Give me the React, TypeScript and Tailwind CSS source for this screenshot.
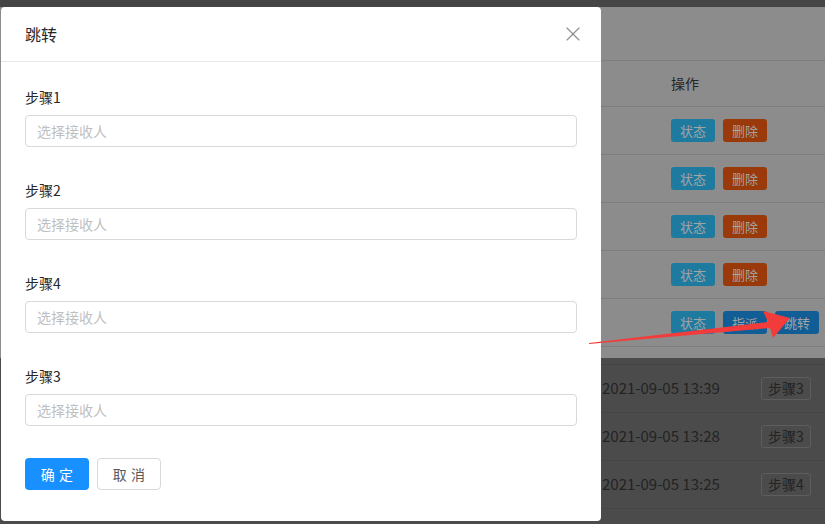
import { X } from "lucide-react";

const rows = ["a", "b", "c", "d"];
const history = [
  { time: "2021-09-05 13:39", step: "步骤3" },
  { time: "2021-09-05 13:28", step: "步骤3" },
  { time: "2021-09-05 13:25", step: "步骤4" },
];
const steps = ["步骤1", "步骤2", "步骤4", "步骤3"];

function DimButton({ label, tone }: { label: string; tone: string }) {
  return (
    <span
      className={`flex h-[23px] w-[44px] items-center justify-center rounded-[3px] text-[13px] text-[#a3a3a3] ${tone}`}
    >
      {label}
    </span>
  );
}

export default function App() {
  return (
    <div
      className="relative h-[524px] w-[825px] overflow-hidden bg-[#4b4b4b]"
      style={{ fontFamily: '"Noto Sans CJK SC", "Noto Sans", sans-serif' }}
    >
      {/* page behind the mask */}
      <div className="h-[7px] bg-[#454545]" />
      <div className="h-[351px] bg-[#8c8c8c] pl-[601px]">
        <div className="h-[54px] border-b border-[#7e7e7e]" />
        <div className="flex h-[46px] items-center border-b border-[#7e7e7e] pl-[70px] text-[14px] text-[#262626]">
          操作
        </div>
        {rows.map((r) => (
          <div
            key={r}
            className="flex h-[48px] items-center gap-2 border-b border-[#7e7e7e] pl-[70px]"
          >
            <DimButton label="状态" tone="bg-[#1f7aa0]" />
            <DimButton label="删除" tone="bg-[#9a3a0b]" />
          </div>
        ))}
        <div className="flex h-[48px] items-center gap-2 border-b border-[#7e7e7e] pl-[70px]">
          <DimButton label="状态" tone="bg-[#1f7aa0]" />
          <DimButton label="指派" tone="bg-[#115d95]" />
          <DimButton label="跳转" tone="bg-[#115d95]" />
        </div>
      </div>
      <div className="h-[7px] border-b border-[#444]" />
      <div className="pl-[602px]">
        {history.map((h) => (
          <div
            key={h.time}
            className="flex h-[48px] items-center justify-between border-b border-[#454545] pr-[14px] text-[15px] text-[#232323]"
          >
            <span>{h.time}</span>
            <span className="flex h-[23px] w-[50px] items-center justify-center rounded-[3px] border border-[#5e5e5e] text-[14px]">
              {h.step}
            </span>
          </div>
        ))}
      </div>

      {/* modal */}
      <div className="absolute left-[1px] top-[7px] w-[600px] rounded-[4px] bg-white">
        <div className="flex h-[55px] items-center justify-between border-b border-[#e8e8e8] pl-6 pr-[16px]">
          <span className="text-[16px] text-[#262626]">跳转</span>
          <X size={24} strokeWidth={1.1} className="text-[#8c8c8c]" />
        </div>
        <div className="px-6 pb-[31px] pt-[24px]">
          {steps.map((s) => (
            <div key={s} className="mb-[32px]">
              <div className="mb-[7px] h-[22px] text-[14px] leading-[22px] text-[#262626]">
                {s}
              </div>
              <div className="flex h-[32px] items-center rounded-[4px] border border-[#d9d9d9] px-[11px] text-[14px] text-[#bfbfbf]">
                选择接收人
              </div>
            </div>
          ))}
          <div className="flex gap-2">
            <button className="h-[32px] w-[64px] rounded-[4px] bg-[#1890ff] pl-[4px] text-[14px] tracking-[0.3em] text-white">
              确定
            </button>
            <button className="h-[32px] w-[64px] rounded-[4px] border border-[#d9d9d9] bg-white pl-[4px] text-[14px] tracking-[0.3em] text-[#595959]">
              取消
            </button>
          </div>
        </div>
      </div>

      {/* annotation arrow */}
      <svg
        className="pointer-events-none absolute left-0 top-0"
        width="825"
        height="524"
        viewBox="0 0 825 524"
      >
        <polygon
          points="589,343 768,322 763,311 790,318 773,338 770,328 589,344"
          fill="#f23c3c"
        />
      </svg>
    </div>
  );
}
